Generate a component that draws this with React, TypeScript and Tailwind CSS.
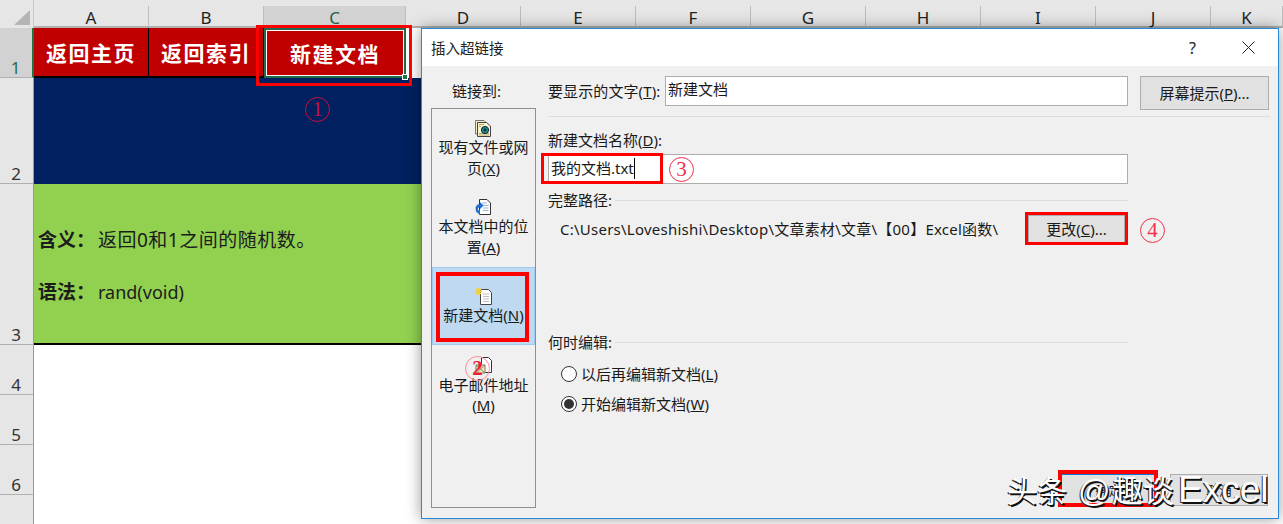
const font = "font-['Noto_Sans','Noto_Sans_CJK_SC',sans-serif]";

const cols = [
  { l: "A", w: "w-[115px]" },
  { l: "B", w: "w-[115px]" },
  { l: "C", w: "w-[142px]" },
  { l: "D", w: "w-[115px]" },
  { l: "E", w: "w-[115px]" },
  { l: "F", w: "w-[115px]" },
  { l: "G", w: "w-[115px]" },
  { l: "H", w: "w-[115px]" },
  { l: "I", w: "w-[115px]" },
  { l: "J", w: "w-[115px]" },
  { l: "K", w: "w-[72px]" },
];

function RowHead({ n, active }: { n: number; active?: boolean }) {
  return (
    <div
      className={`w-[34px] shrink-0 h-full flex items-end justify-center pr-[1px] text-[17px] leading-[18px] border-b border-[#b0b0b0] border-r ${
        active ? "bg-[#d2d2d2] text-[#217346] border-r-[#217346] border-r-2" : "bg-[#e6e6e6] text-[#333] border-r-[#9a9a9a]"
      }`}
    >
      {n}
    </div>
  );
}

function Sheet() {
  const cell = "text-white font-semibold text-[21px] tracking-[1.5px] pt-[3px] flex items-center justify-center";
  return (
    <div className="flex flex-col w-[1283px] h-[524px] bg-white">
      <div className="flex h-[28px] bg-[#e6e6e6] shrink-0">
        <div className="w-[34px] shrink-0 relative border-r border-[#c8c8c8]">
          <svg width="16" height="16" className="absolute left-[14px] top-[10px]">
            <path d="M16 0V15H0Z" fill="#b5b5b5" />
          </svg>
        </div>
        {cols.map((c) => (
          <div
            key={c.l}
            className={`${c.w} shrink-0 mt-[6px] pt-[3px] flex items-center justify-center text-[17px] leading-[19px] border-r border-[#bdbdbd] border-b-2 ${
              c.l === "C" ? "bg-[#d2d2d2] text-[#1f5f45] border-b-[#217346]" : "bg-[#e6e6e6] text-[#222] border-b-[#b0b0b0]"
            }`}
          >
            {c.l}
          </div>
        ))}
      </div>

      <div className="flex h-[50px] shrink-0">
        <RowHead n={1} active />
        <div className={`w-[115px] bg-[#c00000] border-r border-b-2 border-black ${cell}`}>返回主页</div>
        <div className={`w-[115px] bg-[#c00000] border-r border-b-2 border-black ${cell}`}>返回索引</div>
        <div className={`w-[142px] bg-[#c00000] border-2 border-[#1f6b4a] outline outline-1 -outline-offset-3 outline-white relative ${cell}`}>
          新建文档
          <span className="absolute right-[-4px] bottom-[-4px] w-[6px] h-[6px] bg-[#217346] border border-white" />
        </div>
        <div className="flex-1 bg-white" />
      </div>

      <div className="flex h-[106px] shrink-0">
        <RowHead n={2} />
        <div className="w-[1000px] bg-[#002060]" />
      </div>

      <div className="flex h-[161px] shrink-0">
        <RowHead n={3} />
        <div className="w-[1000px] bg-[#92d050] border-b-2 border-black pl-[4px] pt-[43px] flex flex-col gap-[26px] text-[19px] leading-[26px] text-[#1c1c1c]">
          <div className="flex">
            <b className="w-[60px] shrink-0 font-semibold">含义：</b>
            <span className="tracking-[0.5px]">返回0和1之间的随机数。</span>
          </div>
          <div className="flex">
            <b className="w-[60px] shrink-0 font-semibold">语法：</b>
            <span className="text-[18px]">rand(void)</span>
          </div>
        </div>
      </div>

      {[4, 5, 6].map((n) => (
        <div key={n} className="flex h-[50px] shrink-0">
          <RowHead n={n} />
        </div>
      ))}
      <div className="flex flex-1">
        <div className="w-[34px] shrink-0 bg-[#e6e6e6] border-r border-[#9a9a9a]" />
      </div>
    </div>
  );
}

function IconExisting() {
  return (
    <svg width="17" height="17" viewBox="0 0 17 17">
      <path d="M0.5 0.5H9L11 2.5V14H0.5Z" fill="#f4efc6" stroke="#777" />
      <path d="M2.5 2.5H11.5L15.5 6V16.5H2.5Z" fill="#f8f3cf" stroke="#444" />
      <path d="M4 4.5H9M4 6.5H6M4 13.5H14M4 15H14" stroke="#b5a96a" />
      <circle cx="10" cy="10" r="3.6" fill="#1f8f8a" stroke="#123" />
      <circle cx="10" cy="10" r="1.4" fill="#0b2f3a" />
    </svg>
  );
}
function IconPlace() {
  return (
    <svg width="17" height="17" viewBox="0 0 17 17">
      <path d="M4.5 0.5H12L15.5 4V15.5H4.5Z" fill="#fff" stroke="#333" />
      <path d="M7 4H12M7 6.5H13.5M8 9H13.5M8 11.5H13.5" stroke="#9db6d8" />
      <path d="M0.5 8.5C1.5 6 3 5 5 5V3L8.5 6.5L5 10V8C3.5 8 2.5 9 3 11.5L5 11V16L1 12.5Z" fill="#1c6fd0" />
    </svg>
  );
}
function IconNew() {
  return (
    <svg width="20" height="17" viewBox="0 0 20 17">
      <path d="M6.5 1.5H14.5L17.5 4.5V16.5H6.5Z" fill="#fff" stroke="#444" />
      <path d="M9 6H15M9 8.5H15M9 11H15M9 13.5H15" stroke="#bdbdbd" />
      <path d="M4.5 0V7M1 3.5H8M2 1L7 6M7 1L2 6" stroke="#f0cf3a" strokeWidth="1.3" />
    </svg>
  );
}
function IconMail() {
  return (
    <svg width="20" height="19" viewBox="0 0 20 19">
      <path d="M7.5 1.5H14.5L17.5 4.5V16.5H7.5Z" fill="#fff" stroke="#333" />
      <path d="M2 9H11V17H2Z" fill="#f4e7a8" stroke="#777" />
      <path d="M2 9L11 17M11 9L2 17" stroke="#888" />
    </svg>
  );
}

function NavItem({ h, icon, children, active }: { h: string; icon: React.ReactNode; children: React.ReactNode; active?: boolean }) {
  return (
    <div
      className={`${h} flex flex-col items-center text-center text-[15px] leading-[21px] px-[3px] ${
        active ? "bg-[#bfdaf0] border border-[#9ccaf0]" : ""
      }`}
    >
      {icon}
      {children}
    </div>
  );
}

function Btn({ w, h, children, accent }: { w: string; h: string; children: React.ReactNode; accent?: boolean }) {
  return (
    <div
      className={`${w} ${h} shrink-0 flex items-center justify-center bg-[#e1e1e1] border text-[15px] text-[#1a1a1a] ${
        accent ? "border-[#0078d7]" : "border-[#adadad]"
      }`}
    >
      {children}
    </div>
  );
}

function Radio({ checked, children }: { checked?: boolean; children: React.ReactNode }) {
  return (
    <div className="flex items-center h-[30px] pl-[13px] gap-[4px]">
      <span className="w-[16px] h-[16px] rounded-full bg-white border border-[#333] flex items-center justify-center">
        {checked && <span className="w-[10px] h-[10px] rounded-full bg-[#333]" />}
      </span>
      <span>{children}</span>
    </div>
  );
}

function Dialog() {
  return (
    <div className="absolute left-[421px] top-[28px] w-[858px] h-[491px] bg-[#f0f0f0] border border-[#2b88d8] shadow-[0_0_14px_rgba(0,0,0,0.4)] text-[#1a1a1a] text-[15px] leading-[20px] flex flex-col">
      <div className="h-[37px] shrink-0 bg-white flex items-center pl-[9px] pr-[23px] text-[#222] text-[14.5px]">
        <span className="flex-1">插入超链接</span>
        <span className="text-[16px] mr-[46px]">?</span>
        <svg width="13" height="13" viewBox="0 0 13 13">
          <path d="M0.5 0.5L12.5 12.5M12.5 0.5L0.5 12.5" stroke="#222" strokeWidth="1" />
        </svg>
      </div>
      <div className="flex flex-1 pl-[9px]">
        <div className="w-[105px] shrink-0">
          <div className="h-[42px] pt-[15px] pl-[21px]">链接到:</div>
          <div className="w-[105px] h-[400px] border border-[#8e8f94] bg-[#f0f0f0] flex flex-col">
            <NavItem h="h-[78px] pt-[11px]" icon={<IconExisting />}>
              <div>
                现有文件或网
                <br />页(<u>X</u>)
              </div>
            </NavItem>
            <NavItem h="h-[80px] pt-[12px]" icon={<IconPlace />}>
              <div>
                本文档中的位
                <br />置(<u>A</u>)
              </div>
            </NavItem>
            <NavItem active h="h-[78px] pt-[20px]" icon={<IconNew />}>
              <div>
                新建文档(<u>N</u>)
              </div>
            </NavItem>
            <NavItem h="h-[80px] pt-[11px]" icon={<IconMail />}>
              <div className="leading-[20px]">
                电子邮件地址
                <br />(<u>M</u>)
              </div>
            </NavItem>
          </div>
        </div>

        <div className="w-[722px] ml-[12px] flex flex-col">
          <div className="flex mt-[10px]">
            <div className="w-[117px] shrink-0 pt-[5px] whitespace-nowrap tracking-[0.1px]">
              要显示的文字(<u>T</u>):
            </div>
            <div className="w-[463px] h-[30px] shrink-0 bg-white border border-[#adadad] pl-[2px] pt-[2px]">新建文档</div>
            <div className="ml-[12px]">
              <Btn w="w-[129px]" h="h-[34px]">
                屏幕提示(<u>P</u>)...
              </Btn>
            </div>
          </div>
          <div className="h-px bg-[#dcdcdc] mt-[6px]" />
          <div className="mt-[13px] h-[20px]">
            新建文档名称(<u>D</u>):
          </div>
          <div className="w-[580px] h-[30px] mt-[4px] bg-white border border-[#adadad] pl-[2px] pt-[3px] flex items-start">
            <span>我的文档.txt</span>
            <span className="w-px h-[21px] bg-black" />
          </div>
          <div className="mt-[6px] h-[20px] w-[580px] flex items-center gap-[3px]">
            <span>完整路径:</span>
            <span className="flex-1 h-px bg-[#dcdcdc]" />
          </div>
          <div className="mt-[5px] h-[28px] flex items-center">
            <div className="w-[480px] pl-[12px] shrink-0 whitespace-nowrap tracking-[0.24px]">C:\Users\Loveshishi\Desktop\文章素材\文章\【00】Excel函数\</div>
            <Btn w="w-[97px]" h="h-[28px]">
              更改(<u>C</u>)...
            </Btn>
          </div>
          <div className="mt-[89px] h-[20px] w-[580px] flex items-center gap-[3px]">
            <span>何时编辑:</span>
            <span className="flex-1 h-px bg-[#dcdcdc]" />
          </div>
          <div className="mt-[7px]">
            <Radio>
              以后再编辑新文档(<u>L</u>)
            </Radio>
            <Radio checked>
              开始编辑新文档(<u>W</u>)
            </Radio>
          </div>
          <div className="mt-[55px] pl-[512px] flex gap-[13px]">
            <Btn w="w-[97px]" h="h-[32px]" accent>
              <span className="text-[13px]">确定</span>
            </Btn>
            <Btn w="w-[98px]" h="h-[32px]">
              <span className="text-[13px]">取消</span>
            </Btn>
          </div>
        </div>
      </div>
    </div>
  );
}

function Circled({ pos, tone, children }: { pos: string; tone: string; children: React.ReactNode }) {
  return (
    <span
      className={`absolute ${pos} ${tone} w-[25px] h-[25px] rounded-full border flex items-center justify-center text-[21px] leading-none font-['Liberation_Serif',serif]`}
    >
      {children}
    </span>
  );
}

function Annotations() {
  const box = "absolute border-[3px] border-[#ff0000]";
  return (
    <>
      <div className={`${box} left-[256px] top-[25px] w-[156px] h-[61px]`} />
      <div className={`${box} left-[541px] top-[153px] w-[122px] h-[31px]`} />
      <div className={`${box} left-[1025px] top-[212px] w-[103px] h-[33px]`} />
      <div className={`${box} left-[436px] top-[272px] w-[93px] h-[70px] border-[4px]`} />
      <div className={`${box} left-[1058px] top-[470px] w-[100px] h-[37px] border-[4px]`} />
      <Circled pos="left-[305px] top-[97px]" tone="border-[#c8103c] text-[#c8103c]">1</Circled>
      <Circled pos="left-[465px] top-[356px]" tone="border-[#ff8a94] text-[#f02030] font-bold">2</Circled>
      <Circled pos="left-[669px] top-[157px]" tone="border-[#f0304a] text-[#f0304a]">3</Circled>
      <Circled pos="left-[1140px] top-[218px]" tone="border-[#f0304a] text-[#f0304a]">4</Circled>
      <div className="absolute left-[1007px] top-[465px] h-[50px] flex items-baseline whitespace-nowrap text-white font-['Liberation_Sans','Noto_Sans_CJK_SC',sans-serif] [text-shadow:1.5px_1.5px_0_#111,-1px_1px_0_#333]">
        <span className="text-[30px] leading-[50px] w-[71px]">头条</span>
        <span className="text-[32px] leading-[50px] w-[34px]">@</span>
        <span className="text-[31px] leading-[50px] w-[66px]">趣谈</span>
        <span className="text-[37px] leading-[50px]">Excel</span>
      </div>
    </>
  );
}

export default function App() {
  return (
    <div className={`relative w-[1283px] h-[524px] overflow-hidden ${font}`}>
      <Sheet />
      <Dialog />
      <Annotations />
    </div>
  );
}
